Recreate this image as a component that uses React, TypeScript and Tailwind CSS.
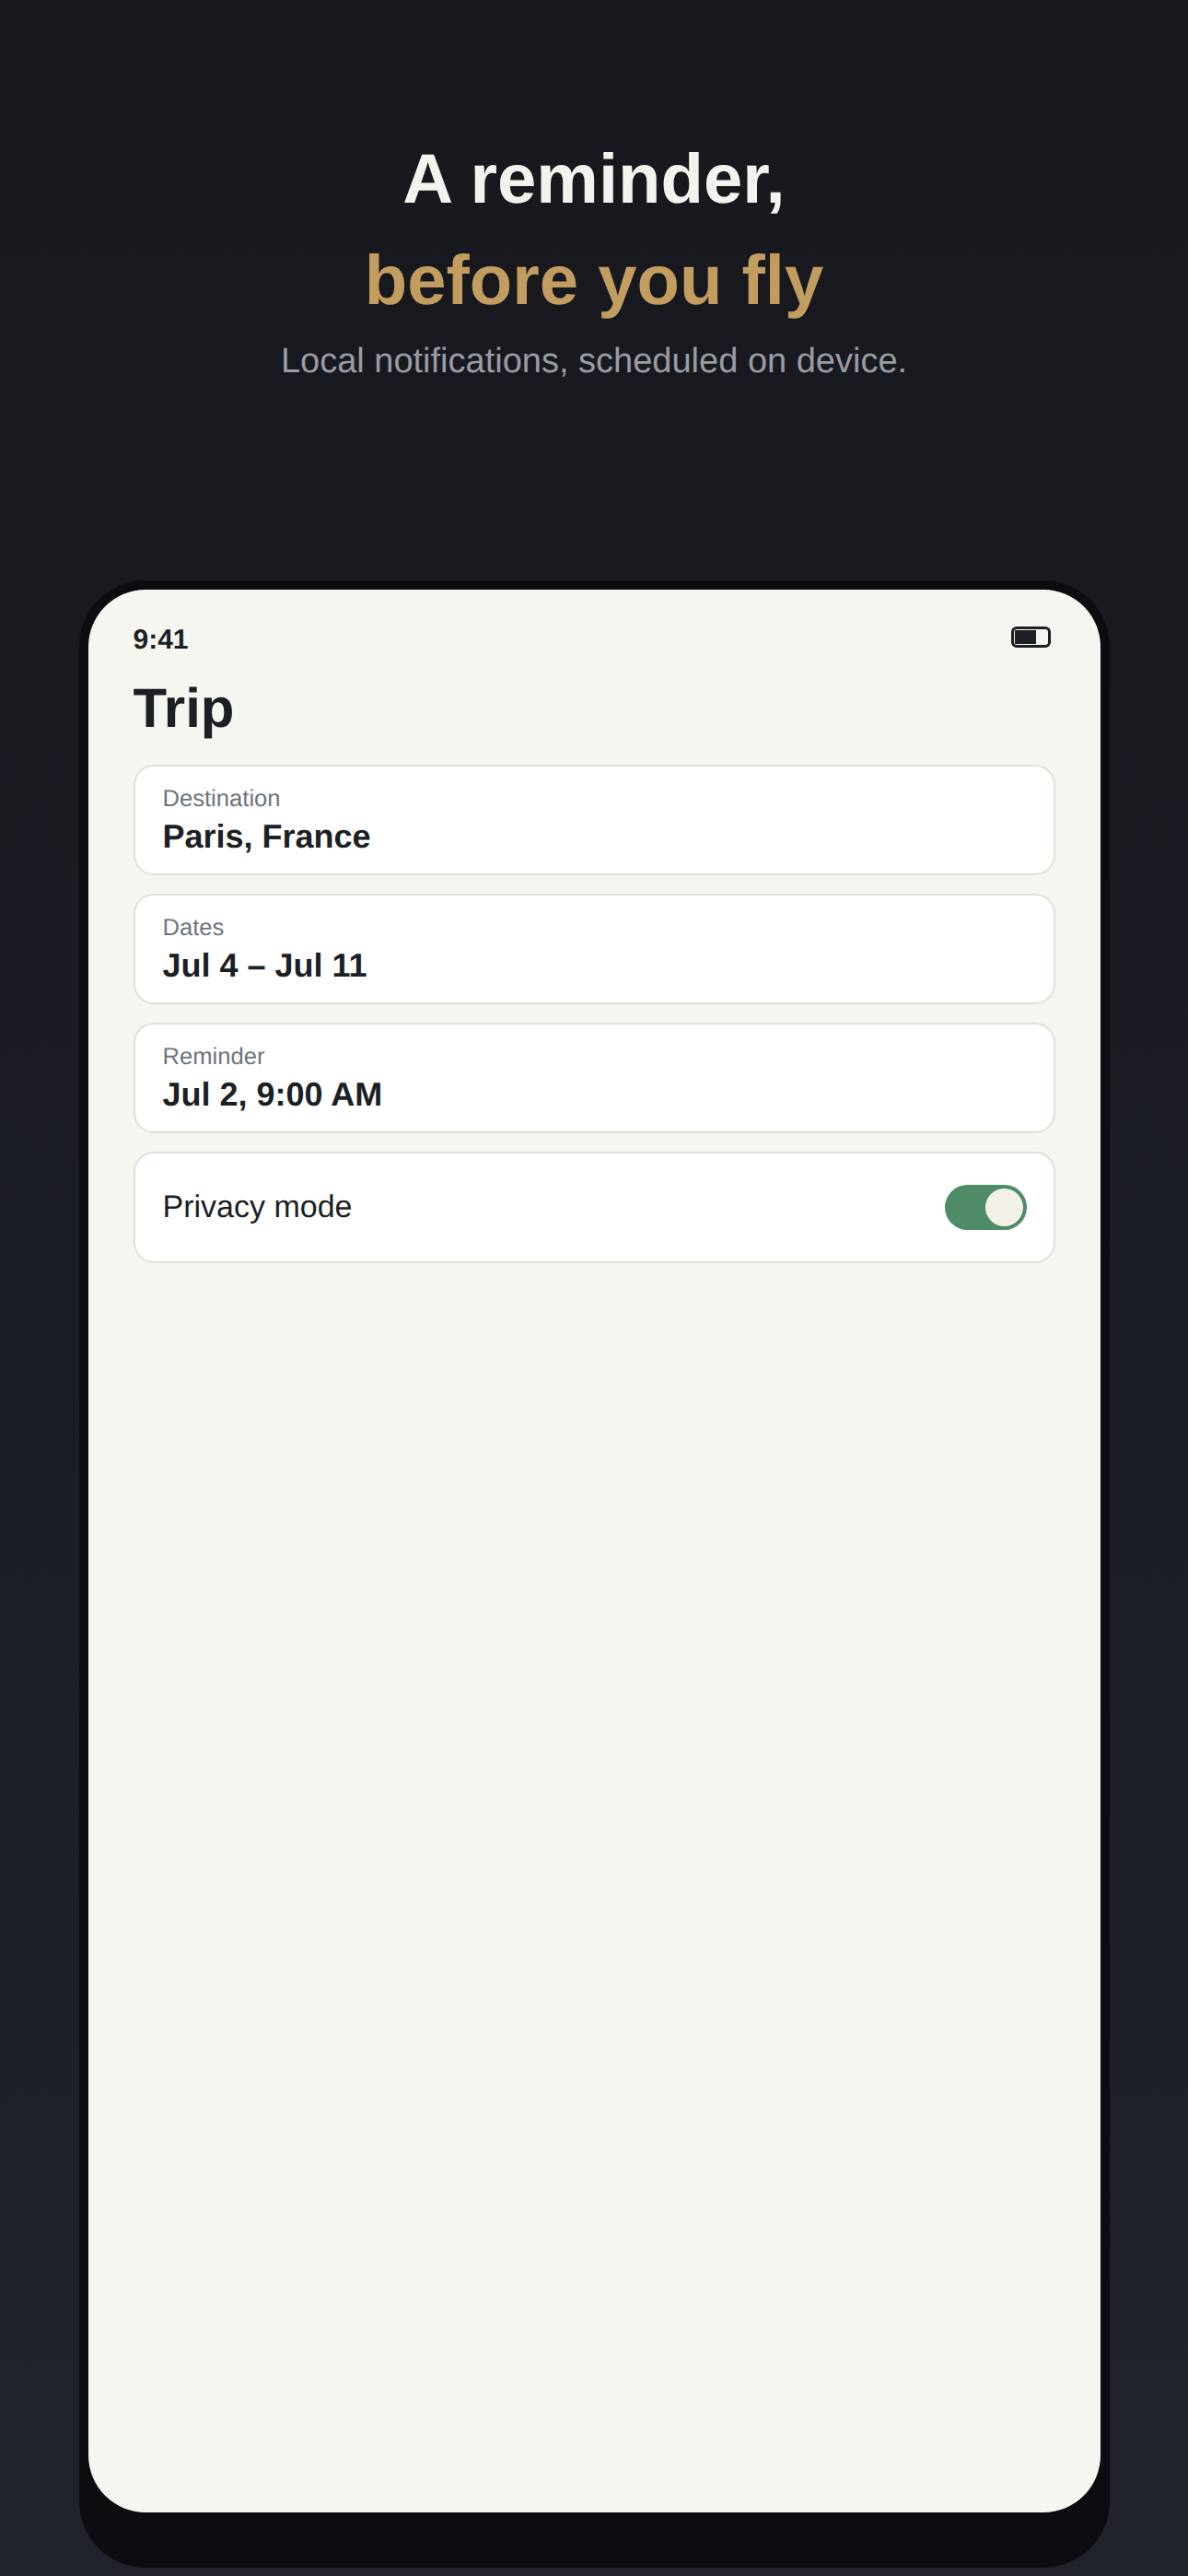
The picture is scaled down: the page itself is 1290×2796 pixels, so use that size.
const fields = [
  { label: "Destination", value: "Paris, France" },
  { label: "Dates", value: "Jul 4 – Jul 11" },
  { label: "Reminder", value: "Jul 2, 9:00 AM" },
];

function BatteryIcon() {
  return (
    <div className="mb-[7px] flex h-[23px] w-[43px] rounded-[6px] border-[3px] border-[#1c1f24] p-px">
      <div className="h-full w-[23px] bg-[#1c1f24]" />
    </div>
  );
}

function Toggle() {
  return (
    <div className="flex h-[49px] w-[89px] items-center justify-end rounded-full bg-[#4e8c68] pr-1">
      <div className="h-[41px] w-[41px] rounded-full bg-[#f3f0ea]" />
    </div>
  );
}

export default function App() {
  return (
    <div className="flex h-[2796px] flex-col items-center overflow-hidden bg-gradient-to-b from-[#16181d] to-[#20232b] font-['Liberation_Sans',Arial,sans-serif] [text-rendering:geometricPrecision]">
      <header className="flex h-[630px] flex-col items-center pt-[140px]">
        <h1 className="text-[76px] leading-[110px] font-bold text-[#f4f2ec]">A reminder,</h1>
        <h1 className="text-[76px] leading-[110px] font-bold text-[#c29d5f]">before you fly</h1>
        <p className="mt-[6px] text-[38px] leading-[52px] text-[#9a9ca3]">
          Local notifications, scheduled on device.
        </p>
      </header>

      <div className="h-[2157px] w-[1119px] shrink-0 rounded-[72px] bg-[#0b0d11] px-[10px] pt-[10px] pb-[60px]">
        <div className="h-full rounded-[62px] bg-[#f5f6f0] px-[49px] pt-[37px]">
          <div className="flex items-center justify-between pr-[5px]">
            <span className="text-[30px] leading-[36px] font-bold text-[#1c1f24]">9:41</span>
            <BatteryIcon />
          </div>
          <h2 className="mt-[18px] text-[60px] leading-[76px] font-bold text-[#1c1f24]">Trip</h2>
          <div className="mt-[23px] flex flex-col gap-[20px]">
            {fields.map((field) => (
              <div
                key={field.label}
                className="h-[120px] rounded-[22px] border-2 border-[#e0e0d8] bg-white px-[30px] pt-[19px]"
              >
                <p className="text-[25.6px] leading-[32px] text-[#6f737c]">{field.label}</p>
                <p className="mt-[2px] text-[36px] leading-[46px] font-bold text-[#1c1f24]">{field.value}</p>
              </div>
            ))}
            <div className="flex h-[121px] items-center justify-between rounded-[22px] border-2 border-[#e0e0d8] bg-white pr-[29px] pl-[30px]">
              <span className="text-[34px] text-[#1c1f24]">Privacy mode</span>
              <Toggle />
            </div>
          </div>
        </div>
      </div>
    </div>
  );
}
